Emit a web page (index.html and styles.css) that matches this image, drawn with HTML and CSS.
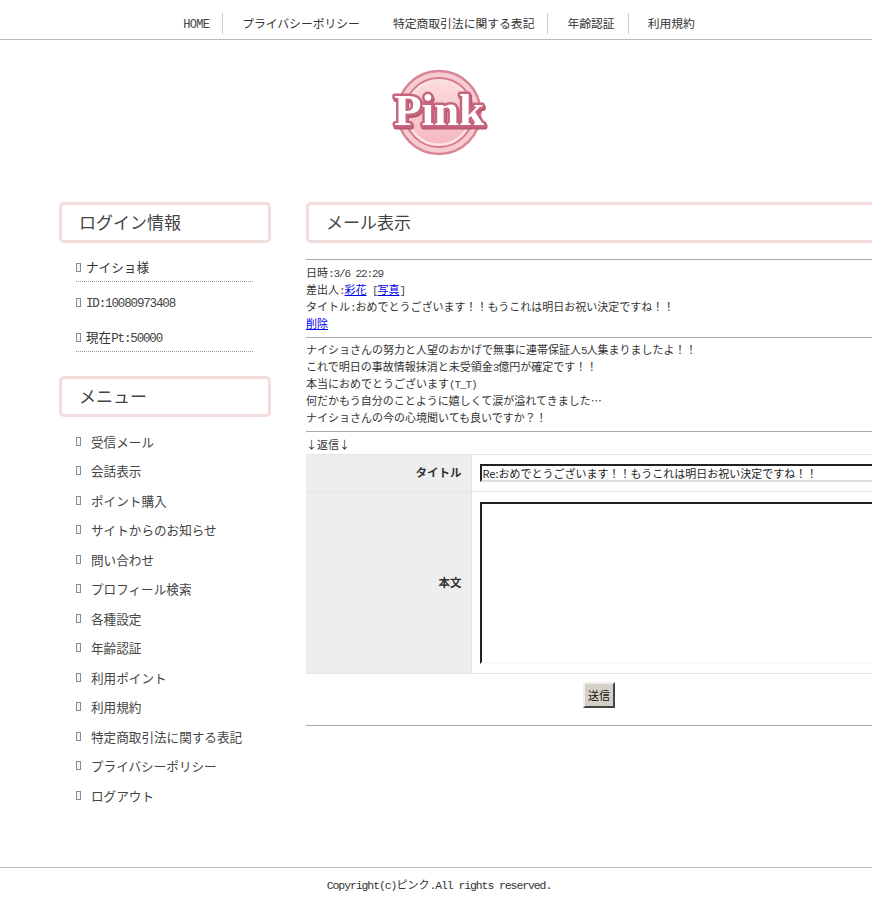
FILE: index.html
```html
<!DOCTYPE html>
<html lang="ja">
<head>
<meta charset="utf-8">
<title>Pink</title>
<link rel="stylesheet" href="styles.css">
</head>
<body>
<header class="top">
  <nav class="nav">
    <a class="nav-item" href="#"><span class="lat">HOME</span></a>
    <a class="nav-item nav-plain" href="#">プライバシーポリシー</a>
    <a class="nav-item" href="#">特定商取引法に関する表記</a>
    <a class="nav-item" href="#">年齢認証</a>
    <a class="nav-item nav-last" href="#">利用規約</a>
  </nav>
</header>
<div class="brand">
  <svg class="logo" width="110" height="100" viewBox="0 0 110 100" role="img" aria-label="Pink">
    <defs>
      <linearGradient id="disc" x1="0" y1="0" x2="0" y2="1">
        <stop offset="0" stop-color="#fbdadd"/>
        <stop offset="1" stop-color="#f5b9c1"/>
      </linearGradient>
    </defs>
    <circle cx="58" cy="47.5" r="41.5" fill="#f7ccd1" stroke="#d98599" stroke-width="2.5"/>
    <circle cx="58" cy="47.5" r="34.5" fill="#fbe3e5" stroke="#d9788e" stroke-width="2"/>
    <circle cx="58" cy="47.5" r="31" fill="url(#disc)"/>
    <text class="logo-text" x="58" y="60">Pink</text>
  </svg>
</div>
<div class="page">
  <aside class="side">
    <h2 class="box-title">ログイン情報</h2>
    <ul class="login">
      <li class="login-item login-dotted"><i class="tofu"></i><span>ナイショ様</span></li>
      <li class="login-item"><i class="tofu"></i><span><span class="lat lat-m">ID:10080973408</span></span></li>
      <li class="login-item login-dotted"><i class="tofu"></i><span>現在<span class="lat lat-m">Pt:50000</span></span></li>
    </ul>
    <h2 class="box-title">メニュー</h2>
    <ul class="menu">
      <li class="menu-item"><i class="tofu"></i><a href="#">受信メール</a></li>
      <li class="menu-item"><i class="tofu"></i><a href="#">会話表示</a></li>
      <li class="menu-item"><i class="tofu"></i><a href="#">ポイント購入</a></li>
      <li class="menu-item"><i class="tofu"></i><a href="#">サイトからのお知らせ</a></li>
      <li class="menu-item"><i class="tofu"></i><a href="#">問い合わせ</a></li>
      <li class="menu-item"><i class="tofu"></i><a href="#">プロフィール検索</a></li>
      <li class="menu-item"><i class="tofu"></i><a href="#">各種設定</a></li>
      <li class="menu-item"><i class="tofu"></i><a href="#">年齢認証</a></li>
      <li class="menu-item"><i class="tofu"></i><a href="#">利用ポイント</a></li>
      <li class="menu-item"><i class="tofu"></i><a href="#">利用規約</a></li>
      <li class="menu-item"><i class="tofu"></i><a href="#">特定商取引法に関する表記</a></li>
      <li class="menu-item"><i class="tofu"></i><a href="#">プライバシーポリシー</a></li>
      <li class="menu-item"><i class="tofu"></i><a href="#">ログアウト</a></li>
    </ul>
  </aside>
  <main class="main">
    <h2 class="box-title">メール表示</h2>
    <section class="mail-head">
      <div>日時<span class="lat lat-s">:3/6 22:29</span></div>
      <div>差出人<span class="lat lat-s">:</span><a href="#">彩花</a><span class="lat lat-s"> [</span><a href="#">写真</a><span class="lat lat-s">]</span></div>
      <div>タイトル<span class="lat lat-s">:</span>おめでとうございます！！もうこれは明日お祝い決定ですね！！</div>
      <div><a href="#">削除</a></div>
    </section>
    <section class="mail-body">
      <div>ナイショさんの努力と人望のおかげで無事に連帯保証人<span class="lat lat-s">5</span>人集まりましたよ！！</div>
      <div>これで明日の事故情報抹消と未受領金<span class="lat lat-s">3</span>億円が確定です！！</div>
      <div>本当におめでとうございます<span class="lat lat-s">(T_T)</span></div>
      <div>何だかもう自分のことように嬉しくて涙が溢れてきました…</div>
      <div>ナイショさんの今の心境聞いても良いですか？！</div>
    </section>
    <form class="reply">
      <div class="reply-label">↓返信↓</div>
      <table class="reply-table">
        <tr class="row-title">
          <th>タイトル</th>
          <td><input class="field" type="text" value="Re:おめでとうございます！！もうこれは明日お祝い決定ですね！！"></td>
        </tr>
        <tr class="row-body">
          <th>本文</th>
          <td><textarea class="area"></textarea></td>
        </tr>
      </table>
      <div class="send"><button class="send-btn" type="button">送信</button></div>
    </form>
  </main>
</div>
<footer class="foot"><span class="lat lat-f">Copyright(c)</span>ピンク<span class="lat lat-f">.All rights reserved.</span></footer>
</body>
</html>
```

FILE: styles.css
```css
html, body {
  margin: 0;
  padding: 0;
  overflow-x: hidden;
  background: #fff;
}
body {
  font-family: "Noto Sans CJK JP", "Liberation Sans", sans-serif;
  color: #333;
  width: 872px;
}
a { color: inherit; text-decoration: none; }
ul { list-style: none; margin: 0; padding: 0; }

.lat {
  font-family: "Liberation Mono", monospace;
  font-size: 12px;
  letter-spacing: -0.7px;
  line-height: 1;
  color: #444;
}
.lat-m { font-size: 12.5px; letter-spacing: -1.14px; }
.lat-s { font-size: 11px; letter-spacing: -1.1px; }
.lat-f { font-size: 11.5px; letter-spacing: -1.1px; color: #333; }

.top {
  height: 39px;
  border-bottom: 1px solid #bbb;
}
.nav {
  display: flex;
  justify-content: center;
  padding-top: 13px;
}
.nav-item {
  display: block;
  height: 21px;
  line-height: 20px;
  font-size: 11.8px;
  padding: 0 13px 0 19px;
  border-right: 1px solid #ccc;
  white-space: nowrap;
}
.nav-plain { border-right-color: transparent; }
.nav-last { border-right: 0; }

.brand {
  display: flex;
  justify-content: center;
  padding: 25px 0 37px;
}
.logo { display: block; }
.logo-text {
  font-family: "Liberation Serif", serif;
  font-weight: 700;
  font-size: 45px;
  text-anchor: middle;
  fill: #fff;
  stroke: #c9647e;
  stroke-width: 5px;
  stroke-linejoin: round;
  paint-order: stroke;
  filter: drop-shadow(1px 2px 0 #b9576f);
}

.page {
  display: flex;
  padding-left: 59px;
  gap: 35px;
}
.side { width: 212px; flex: none; }
.main { width: 586px; flex: none; }

.box-title {
  margin: 0;
  height: 41px;
  box-sizing: border-box;
  border: 3px solid #f2dcdc;
  border-radius: 5px;
  padding-left: 17px;
  font-size: 17px;
  font-weight: 400;
  line-height: 33px;
  color: #444;
  white-space: nowrap;
}

.tofu {
  display: block;
  flex: none;
  width: 3px;
  height: 7px;
  border: 1px solid #7f8f9d;
  background: #f4f6f8;
}

.login {
  margin: 12px 0 24px 17px;
  width: 177px;
  font-size: 12.6px;
}
.login-item {
  display: flex;
  align-items: center;
  gap: 5px;
  height: 23px;
  padding-bottom: 3px;
  margin-bottom: 8px;
  border-bottom: 1px dotted transparent;
}
.login-item .tofu { margin-top: 2px; }
.login-dotted { border-bottom-color: #999; }

.menu {
  margin: 9.7px 0 0 17px;
  font-size: 12.6px;
}
.menu-item {
  display: flex;
  align-items: center;
  gap: 10px;
  height: 29.5px;
  color: #444;
  white-space: nowrap;
}

.mail-head, .mail-body {
  font-size: 11px;
  line-height: 17px;
  border-top: 1px solid #aaa;
  white-space: nowrap;
}
.mail-head { margin-top: 16px; padding: 4px 0 5px; }
.mail-body { padding: 3px 0 5px; }
.mail-head a { color: #00e; text-decoration: underline; }

.reply {
  border-top: 1px solid #aaa;
}
.reply-label {
  font-size: 11px;
  line-height: 17px;
  padding: 4px 0 1px;
}
.reply-table {
  width: 586px;
  table-layout: fixed;
  border-collapse: collapse;
}
.reply-table th {
  width: 165px;
  box-sizing: border-box;
  background: #eee;
  border: 1px solid #e4e4e4;
  border-width: 1px 1px 1px 0;
  padding: 0 9px 2px 0;
  text-align: right;
  font-size: 11.5px;
  font-weight: 700;
}
.reply-table td {
  border-top: 1px solid #e4e4e4;
  border-bottom: 1px solid #e4e4e4;
  padding: 0 0 0 8px;
}
.row-title { height: 37px; }
.row-body { height: 182px; }

.field, .area {
  display: block;
  box-sizing: border-box;
  width: 400px;
  border: 2px solid;
  border-color: #222 #ddd #ddd #222;
  margin: 0;
  padding: 0;
  background: #fff;
  font-family: inherit;
  font-size: 11px;
  color: #222;
  outline: 0;
  border-radius: 0;
}
.field { height: 18px; line-height: 14px; padding-left: 1px; }
.area { height: 162px; resize: none; border-bottom-color: #fafafa; }

.send {
  display: flex;
  justify-content: center;
  padding: 8px 0 17px;
  border-bottom: 1px solid #aaa;
}
.send-btn {
  width: 32px;
  height: 26px;
  box-sizing: border-box;
  padding: 0;
  border: 2px solid;
  border-color: #f0eee8 #444 #444 #f0eee8;
  background: #d4d0c8;
  font-family: inherit;
  font-size: 11px;
  color: #111;
  border-radius: 0;
}

.foot {
  margin-top: 57px;
  border-top: 1px solid #bbb;
  height: 33px;
  line-height: 33px;
  font-size: 11px;
  text-align: center;
  padding-left: 6px;
  white-space: nowrap;
}
```
